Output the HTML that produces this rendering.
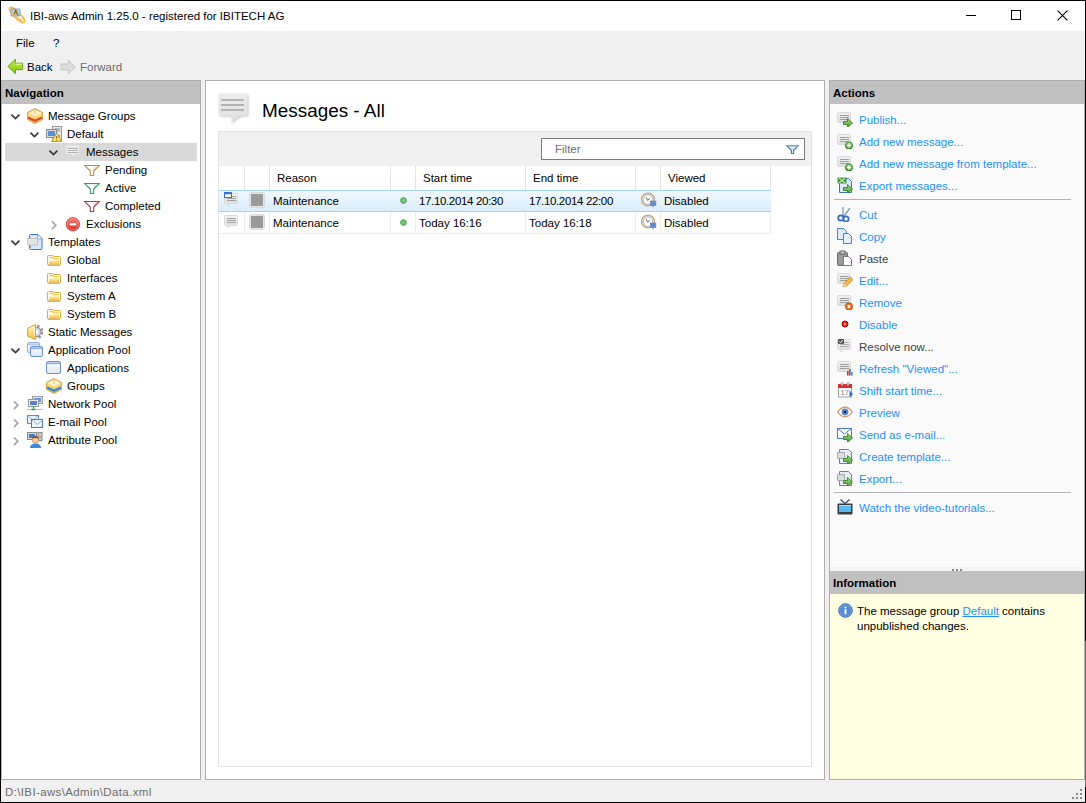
<!DOCTYPE html><html><head><meta charset="utf-8"><style>
html,body{margin:0;padding:0}
body{width:1086px;height:803px;overflow:hidden;position:relative;background:#f0f0f0;font-family:"Liberation Sans",sans-serif;font-size:11.5px;color:#000}
.a{position:absolute;display:block}
.t{position:absolute;white-space:nowrap;line-height:18px;height:18px}
.b{font-weight:bold}
.lnk{color:#1e90ff}
.gry{color:#6d6d6d}
.dk{color:#444}
</style></head><body>

<svg width="0" height="0" style="position:absolute">
<defs>
<linearGradient id="gYel" x1="0" y1="0" x2="0" y2="1"><stop offset="0" stop-color="#fff3c0"/><stop offset="1" stop-color="#f2c23a"/></linearGradient>
<linearGradient id="gFold" x1="0" y1="0" x2="0" y2="1"><stop offset="0" stop-color="#fff0b0"/><stop offset="1" stop-color="#f0c040"/></linearGradient>
<linearGradient id="gBub" x1="0" y1="0" x2="0" y2="1"><stop offset="0" stop-color="#f2f2f2"/><stop offset="1" stop-color="#dcdcdc"/></linearGradient>
<linearGradient id="gRed" x1="0" y1="0" x2="0" y2="1"><stop offset="0" stop-color="#f57a70"/><stop offset="1" stop-color="#d02c2c"/></linearGradient>
<linearGradient id="gGrn" x1="0" y1="0" x2="0" y2="1"><stop offset="0" stop-color="#a8d890"/><stop offset="1" stop-color="#4a9a30"/></linearGradient>
<linearGradient id="gWin" x1="0" y1="0" x2="0" y2="1"><stop offset="0" stop-color="#ffffff"/><stop offset="1" stop-color="#dfe8f5"/></linearGradient>
<linearGradient id="gSel" x1="0" y1="0" x2="0" y2="1"><stop offset="0" stop-color="#f0f8fe"/><stop offset="1" stop-color="#d8ecfb"/></linearGradient>
</defs></svg>
<div class="a" style="left:1px;top:1px;width:1084px;height:30px;background:#fff"></div>
<svg class="a" style="left:6px;top:4px" width="22" height="22" viewBox="0 0 22 22"><ellipse cx="11" cy="11" rx="10.2" ry="3.1" transform="rotate(45 11 11)" fill="#fff6dc" stroke="#f2b84a" stroke-width="1.5"/><rect x="5" y="5" width="9" height="7" fill="#a8c8ea" fill-opacity="0.85" stroke="#7090b8" stroke-width="0.7"/><path d="M7.6 11.5L9.7 6.3L11.8 11.5" stroke="#8a7010" fill="none" stroke-width="1.4"/><path d="M5.2 8.5Q10 14 16 17" stroke="#f2b84a" stroke-width="1.3" fill="none"/></svg>
<div class="t " style="left:30px;top:7px;">IBI-aws Admin 1.25.0 - registered for IBITECH AG</div>
<div class="a" style="left:966px;top:15px;width:10px;height:1px;background:#000"></div>
<div class="a" style="left:1011px;top:10px;width:8px;height:8px;border:1px solid #000"></div>
<svg class="a" style="left:1057px;top:10px" width="11" height="11" viewBox="0 0 11 11"><path d="M0.6 0.6l9.8 9.8M10.4 0.6l-9.8 9.8" stroke="#000" stroke-width="1.1"/></svg>
<div class="t " style="left:16px;top:34px;">File</div>
<div class="t " style="left:53px;top:34px;">?</div>
<svg class="a" style="left:5px;top:56px" width="22" height="22" viewBox="0 0 22 22"><defs><linearGradient id="gBack" x1="0" y1="0" x2="0" y2="1"><stop offset="0" stop-color="#c8f05a"/><stop offset="1" stop-color="#86c400"/></linearGradient></defs><path d="M3 10.4L10.4 3V7.2H17.6V13.6H10.4V17.8Z" fill="url(#gBack)" stroke="#66a810" stroke-width="1"/><path d="M11 8.2H16.6" stroke="#e0ffa0" stroke-width="1"/></svg>
<div class="t " style="left:27px;top:58px;">Back</div>
<svg class="a" style="left:60px;top:59px" width="16" height="16" viewBox="0 0 16 16"><path d="M15.2 8L8.5 1.2V5H1v6h7.5v3.8z" fill="#dcdcdc" stroke="#c4c4c4" stroke-width="1"/></svg>
<div class="t gry" style="left:80px;top:58px;">Forward</div>
<div class="a" style="left:1px;top:80px;width:200px;height:700px;background:#fff;box-sizing:border-box;border:1px solid #afafaf"></div>
<div class="a" style="left:2px;top:81px;width:198px;height:23px;background:#c0c0c0"></div>
<div class="t b" style="left:5px;top:84px;">Navigation</div>
<div class="a" style="left:5px;top:143px;width:192px;height:18px;background:#d9d9d9"></div>
<svg class="a" style="left:11px;top:113px" width="10" height="8" viewBox="0 0 10 8"><path d="M0.5 1.7L4.5 5.6L8.4 1.7" stroke="#3c3c3c" stroke-width="1.7" fill="none"/></svg>
<svg class="a" style="left:27px;top:108px" width="16" height="16" viewBox="0 0 16 16"><path d="M8 0.7L15.3 4.5V11.5L8 15.3L0.7 11.5V4.5Z" fill="url(#gYel)" stroke="#dba34a" stroke-width="1.2"/><path d="M8 1.8L14 5L8 8.2L2 5Z" fill="#fffbe8" opacity="0.7"/><path d="M1.2 9.6L8 12.8L14.8 9.6" stroke="#d94a3a" stroke-width="2.2" fill="none"/><path d="M8 2v4" stroke="#e0a84a" stroke-width="0.8"/></svg>
<div class="t " style="left:48px;top:107px;">Message Groups</div>
<svg class="a" style="left:30px;top:131px" width="10" height="8" viewBox="0 0 10 8"><path d="M0.5 1.7L4.5 5.6L8.4 1.7" stroke="#3c3c3c" stroke-width="1.7" fill="none"/></svg>
<svg class="a" style="left:46px;top:126px" width="16" height="16" viewBox="0 0 16 16"><rect x="6.5" y="0.5" width="9" height="14" fill="#e8e8e8" stroke="#9a9a9a"/><path d="M9 3h5M9 5h5" stroke="#888"/><circle cx="13" cy="10" r="1" fill="#3a3"/><rect x="0.5" y="3.5" width="10" height="8" fill="#d8d8d8" stroke="#8a8a8a"/><rect x="2" y="5" width="7" height="5" fill="#5a8fd8"/><path d="M5.5 15.5L10.7 7l5 8.5z" fill="#fbe36a" stroke="#d4902a"/><path d="M10.7 10v2.5M10.7 13.5v1" stroke="#8a5a10"/></svg>
<div class="t " style="left:67px;top:125px;">Default</div>
<svg class="a" style="left:49px;top:149px" width="10" height="8" viewBox="0 0 10 8"><path d="M0.5 1.7L4.5 5.6L8.4 1.7" stroke="#3c3c3c" stroke-width="1.7" fill="none"/></svg>
<svg class="a" style="left:65px;top:144px" width="16" height="16" viewBox="0 0 16 16"><path d="M1.5 1h12a1 1 0 0 1 1 1v7.5a1 1 0 0 1-1 1h-2.8l-3.7 3.5v-3.5h-5.5a1 1 0 0 1-1-1v-7.5a1 1 0 0 1 1-1z" fill="#eeeeee" stroke="#d6d6d6"/><path d="M2.5 4.4h10.5M2.5 6.5h10.5M2.5 8.5h10.5" stroke="#b2b2b2" stroke-width="1.1"/></svg>
<div class="t " style="left:86px;top:143px;">Messages</div>
<svg class="a" style="left:84px;top:162px" width="16" height="16" viewBox="0 0 16 16"><path d="M0.5 3.5h15l-5.8 5.6v4.4h-3.4v-4.4z" fill="#fff" stroke="#d08a40" stroke-width="1.1"/><path d="M9.5 4.5l4.5 0l-4.5 4.2z" fill="#d08a40" opacity="0.25"/></svg>
<div class="t " style="left:105px;top:161px;">Pending</div>
<svg class="a" style="left:84px;top:180px" width="16" height="16" viewBox="0 0 16 16"><path d="M0.5 3.5h15l-5.8 5.6v4.4h-3.4v-4.4z" fill="#fff" stroke="#30a060" stroke-width="1.1"/><path d="M9.5 4.5l4.5 0l-4.5 4.2z" fill="#30a060" opacity="0.25"/></svg>
<div class="t " style="left:105px;top:179px;">Active</div>
<svg class="a" style="left:84px;top:198px" width="16" height="16" viewBox="0 0 16 16"><path d="M0.5 3.5h15l-5.8 5.6v4.4h-3.4v-4.4z" fill="#fff" stroke="#b83a3a" stroke-width="1.1"/><path d="M9.5 4.5l4.5 0l-4.5 4.2z" fill="#b83a3a" opacity="0.25"/></svg>
<div class="t " style="left:105px;top:197px;">Completed</div>
<svg class="a" style="left:51px;top:219px" width="7" height="12" viewBox="0 0 7 12"><path d="M1 2.3L4.8 6.2L1 10.1" stroke="#a8a8a8" stroke-width="1.7" fill="none"/></svg>
<svg class="a" style="left:65px;top:216px" width="16" height="16" viewBox="0 0 16 16"><circle cx="7.9" cy="8.3" r="6.7" fill="url(#gRed)" stroke="#d04a40" stroke-width="0.9"/><circle cx="7.9" cy="8.3" r="5.5" fill="none" stroke="#fbd0c8" stroke-width="0.6" opacity="0.7"/><rect x="4.6" y="7.2" width="6.6" height="2.2" fill="#fff"/></svg>
<div class="t " style="left:86px;top:215px;">Exclusions</div>
<svg class="a" style="left:11px;top:239px" width="10" height="8" viewBox="0 0 10 8"><path d="M0.5 1.7L4.5 5.6L8.4 1.7" stroke="#3c3c3c" stroke-width="1.7" fill="none"/></svg>
<svg class="a" style="left:27px;top:234px" width="16" height="16" viewBox="0 0 16 16"><path d="M3.5 0.5h7.5l4 4v10a1 1 0 0 1-1 1h-10.5a1 1 0 0 1-1-1v-13a1 1 0 0 1 1-1z" fill="#d8e7fb" stroke="#3c78d0"/><path d="M10.5 1v4h4" fill="#eef5fe" stroke="#7aa6e0" stroke-width="0.8"/><path d="M1.2 4.5h8.3a1 1 0 0 1 1 1v4.5a1 1 0 0 1-1 1h-4.3l-1.7 3v-3h-2.3a1 1 0 0 1-1-1v-4.5a1 1 0 0 1 1-1z" fill="#e4e4e4" stroke="#bdbdbd"/></svg>
<div class="t " style="left:48px;top:233px;">Templates</div>
<svg class="a" style="left:46px;top:252px" width="16" height="16" viewBox="0 0 16 16"><path d="M2.5 3.5h4.5l0.8 1h5.7a1 1 0 0 1 1 1v6.5a1 1 0 0 1-1 1h-11a1 1 0 0 1-1-1v-7.5a1 1 0 0 1 1-1z" fill="#fffcea" stroke="#ddb040" stroke-width="1"/><path d="M3.2 5.5h3.6l0.9 1.2h5.1" stroke="#f0d060" stroke-width="1.3" fill="none"/><path d="M3.2 8.8h3.6l0.8-0.8h5.4v4.2h-9.8z" fill="url(#gFold)"/><path d="M2.2 13.2h11.6" stroke="#e39a3a" stroke-width="1"/></svg>
<div class="t " style="left:67px;top:251px;">Global</div>
<svg class="a" style="left:46px;top:270px" width="16" height="16" viewBox="0 0 16 16"><path d="M2.5 3.5h4.5l0.8 1h5.7a1 1 0 0 1 1 1v6.5a1 1 0 0 1-1 1h-11a1 1 0 0 1-1-1v-7.5a1 1 0 0 1 1-1z" fill="#fffcea" stroke="#ddb040" stroke-width="1"/><path d="M3.2 5.5h3.6l0.9 1.2h5.1" stroke="#f0d060" stroke-width="1.3" fill="none"/><path d="M3.2 8.8h3.6l0.8-0.8h5.4v4.2h-9.8z" fill="url(#gFold)"/><path d="M2.2 13.2h11.6" stroke="#e39a3a" stroke-width="1"/></svg>
<div class="t " style="left:67px;top:269px;">Interfaces</div>
<svg class="a" style="left:46px;top:288px" width="16" height="16" viewBox="0 0 16 16"><path d="M2.5 3.5h4.5l0.8 1h5.7a1 1 0 0 1 1 1v6.5a1 1 0 0 1-1 1h-11a1 1 0 0 1-1-1v-7.5a1 1 0 0 1 1-1z" fill="#fffcea" stroke="#ddb040" stroke-width="1"/><path d="M3.2 5.5h3.6l0.9 1.2h5.1" stroke="#f0d060" stroke-width="1.3" fill="none"/><path d="M3.2 8.8h3.6l0.8-0.8h5.4v4.2h-9.8z" fill="url(#gFold)"/><path d="M2.2 13.2h11.6" stroke="#e39a3a" stroke-width="1"/></svg>
<div class="t " style="left:67px;top:287px;">System A</div>
<svg class="a" style="left:46px;top:306px" width="16" height="16" viewBox="0 0 16 16"><path d="M2.5 3.5h4.5l0.8 1h5.7a1 1 0 0 1 1 1v6.5a1 1 0 0 1-1 1h-11a1 1 0 0 1-1-1v-7.5a1 1 0 0 1 1-1z" fill="#fffcea" stroke="#ddb040" stroke-width="1"/><path d="M3.2 5.5h3.6l0.9 1.2h5.1" stroke="#f0d060" stroke-width="1.3" fill="none"/><path d="M3.2 8.8h3.6l0.8-0.8h5.4v4.2h-9.8z" fill="url(#gFold)"/><path d="M2.2 13.2h11.6" stroke="#e39a3a" stroke-width="1"/></svg>
<div class="t " style="left:67px;top:305px;">System B</div>
<svg class="a" style="left:27px;top:324px" width="16" height="16" viewBox="0 0 16 16"><circle cx="9.5" cy="8" r="5.9" fill="none" stroke="#9a9a9a" stroke-width="2.6" stroke-dasharray="2.3 2.33"/><circle cx="9.5" cy="8" r="4.7" fill="#d4d4d4" stroke="#7c7c7c" stroke-width="0.9"/><circle cx="9.5" cy="8" r="1.9" fill="#fff"/><path d="M0.6 4.2L8.4 0.5V15.5L0.6 12.2z" fill="url(#gYel)" stroke="#dba34a" stroke-width="1"/><path d="M2 5.5L7.5 3v9" stroke="#fff8e0" stroke-width="0.8" fill="none"/></svg>
<div class="t " style="left:48px;top:323px;">Static Messages</div>
<svg class="a" style="left:11px;top:347px" width="10" height="8" viewBox="0 0 10 8"><path d="M0.5 1.7L4.5 5.6L8.4 1.7" stroke="#3c3c3c" stroke-width="1.7" fill="none"/></svg>
<svg class="a" style="left:27px;top:342px" width="16" height="16" viewBox="0 0 16 16"><rect x="0.5" y="0.5" width="12" height="10" rx="1.5" fill="url(#gWin)" stroke="#9ab4e0"/><path d="M1 2.3h11" stroke="#b4c8ea" stroke-width="1.8"/><rect x="3.5" y="4.5" width="12" height="10" rx="1.5" fill="url(#gWin)" stroke="#6a90d0"/><path d="M4 6.3h11" stroke="#94b0e0" stroke-width="1.8"/></svg>
<div class="t " style="left:48px;top:341px;">Application Pool</div>
<svg class="a" style="left:46px;top:360px" width="16" height="16" viewBox="0 0 16 16"><rect x="0.5" y="1.5" width="14" height="12" rx="1.5" fill="url(#gWin)" stroke="#6a90d0"/><path d="M1 3.3h13" stroke="#94b0e0" stroke-width="1.8"/></svg>
<div class="t " style="left:67px;top:359px;">Applications</div>
<svg class="a" style="left:46px;top:378px" width="16" height="16" viewBox="0 0 16 16"><path d="M8 0.7L15.3 4.5V11.5L8 15.3L0.7 11.5V4.5Z" fill="url(#gYel)" stroke="#dba34a" stroke-width="1.2"/><path d="M8 1.8L14 5L8 8.2L2 5Z" fill="#fffbe8" opacity="0.7"/><path d="M1.2 9.6L8 12.8L14.8 9.6" stroke="#2a8ad8" stroke-width="2.2" fill="none"/><path d="M8 2v4" stroke="#e0a84a" stroke-width="0.8"/></svg>
<div class="t " style="left:67px;top:377px;">Groups</div>
<svg class="a" style="left:13px;top:399px" width="7" height="12" viewBox="0 0 7 12"><path d="M1 2.3L4.8 6.2L1 10.1" stroke="#a8a8a8" stroke-width="1.7" fill="none"/></svg>
<svg class="a" style="left:27px;top:396px" width="16" height="16" viewBox="0 0 16 16"><rect x="5.5" y="0.5" width="10" height="7" fill="#e6e6e6" stroke="#a0a0a0"/><rect x="7" y="2" width="7" height="4" fill="#6a94d4"/><rect x="1.5" y="3.5" width="10" height="7" fill="#eeeeee" stroke="#9a9a9a"/><rect x="3" y="5" width="7" height="4" fill="#5a84c8"/><path d="M0 13.5h16" stroke="#c0c0c0" stroke-width="1.2"/><path d="M6.5 10.5v2M4.5 13.5h4" stroke="#40a860" stroke-width="1.6"/></svg>
<div class="t " style="left:48px;top:395px;">Network Pool</div>
<svg class="a" style="left:13px;top:417px" width="7" height="12" viewBox="0 0 7 12"><path d="M1 2.3L4.8 6.2L1 10.1" stroke="#a8a8a8" stroke-width="1.7" fill="none"/></svg>
<svg class="a" style="left:27px;top:414px" width="16" height="16" viewBox="0 0 16 16"><rect x="0.5" y="1.5" width="11" height="8" fill="#eef4fc" stroke="#5a8ad0"/><path d="M1 2l5 4l5-4" stroke="#9ab8e4" fill="none"/><rect x="4.5" y="5.5" width="11" height="8" fill="#f2f7fd" stroke="#4a7ac8"/><path d="M5 6l5.5 4.5l5-4.5" stroke="#8aaee0" fill="none"/></svg>
<div class="t " style="left:48px;top:413px;">E-mail Pool</div>
<svg class="a" style="left:13px;top:435px" width="7" height="12" viewBox="0 0 7 12"><path d="M1 2.3L4.8 6.2L1 10.1" stroke="#a8a8a8" stroke-width="1.7" fill="none"/></svg>
<svg class="a" style="left:27px;top:432px" width="16" height="16" viewBox="0 0 16 16"><rect x="0.5" y="0.5" width="9" height="7" fill="#d8d8d8" stroke="#888"/><rect x="2" y="2" width="6" height="4" fill="#4a7ac0"/><rect x="11" y="0.5" width="4" height="8" fill="#ccc" stroke="#888"/><circle cx="13" cy="5" r="0.8" fill="#3a3"/><path d="M3 16c0-3 2-4.5 5.5-4.5s5.5 1.5 5.5 4.5z" fill="#3a8ae0"/><circle cx="8.5" cy="8" r="3.3" fill="#f5c8a0" stroke="#c08050" stroke-width="0.6"/><path d="M5.2 7.5c0-2.5 1.5-3.6 3.3-3.6s3.3 1.1 3.3 3.6c-1-1.2-2-1.5-3.3-1.5s-2.3 0.3-3.3 1.5z" fill="#8a4a20"/></svg>
<div class="t " style="left:48px;top:431px;">Attribute Pool</div>
<div class="a" style="left:205px;top:80px;width:620px;height:700px;background:#fff;box-sizing:border-box;border:1px solid #afafaf"></div>
<svg class="a" style="left:218px;top:93px" width="32" height="32" viewBox="0 0 32 32"><defs><filter id="sh" x="-20%" y="-20%" width="140%" height="140%"><feGaussianBlur stdDeviation="0.9"/></filter><linearGradient id="gBig" x1="0" y1="0" x2="0" y2="1"><stop offset="0" stop-color="#ececec"/><stop offset="1" stop-color="#e0e0e0"/></linearGradient></defs><path d="M2.5 0.5h25a2 2 0 0 1 2 2v18a2 2 0 0 1-2 2h-5.5l-8.5 7v-7h-11a2 2 0 0 1-2-2v-18a2 2 0 0 1 2-2z" fill="#c8c8c8" filter="url(#sh)" transform="translate(1 1)"/><path d="M2.5 0.5h25a2 2 0 0 1 2 2v18a2 2 0 0 1-2 2h-5.5l-8.5 7v-7h-11a2 2 0 0 1-2-2v-18a2 2 0 0 1 2-2z" fill="url(#gBig)"/><path d="M3 7h23M3 12h23M3 17h23" stroke="#b4b4b4" stroke-width="2"/></svg>
<div class="t" style="left:262px;top:99px;font-size:18.9px;line-height:24px;height:24px">Messages - All</div>
<div class="a" style="left:218px;top:131px;width:594px;height:636px;box-sizing:border-box;border:1px solid #e3e3e3;background:#fff"></div>
<div class="a" style="left:219px;top:132px;width:592px;height:34px;background:#f0f0f0"></div>
<div class="a" style="left:541px;top:138px;width:264px;height:22px;box-sizing:border-box;border:1px solid #7a7a7a;background:#fff"></div>
<div class="t gry" style="left:555px;top:140px;">Filter</div>
<svg class="a" style="left:786px;top:145px" width="13" height="10" viewBox="0 0 13 10"><path d="M0.7 0.7H12.3L7.6 5.3V8.5H5.4V5.3Z" fill="#e4eefb" stroke="#3a72cc" stroke-width="1.1"/><path d="M1.5 1.3H11.5" stroke="#a8c8f0" stroke-width="1.2"/></svg>
<div class="a" style="left:244px;top:166px;width:1px;height:24px;background:#e3e3e3"></div>
<div class="a" style="left:269px;top:166px;width:1px;height:24px;background:#e3e3e3"></div>
<div class="a" style="left:390px;top:166px;width:1px;height:24px;background:#e3e3e3"></div>
<div class="a" style="left:415px;top:166px;width:1px;height:24px;background:#e3e3e3"></div>
<div class="a" style="left:525px;top:166px;width:1px;height:24px;background:#e3e3e3"></div>
<div class="a" style="left:635px;top:166px;width:1px;height:24px;background:#e3e3e3"></div>
<div class="a" style="left:660px;top:166px;width:1px;height:24px;background:#e3e3e3"></div>
<div class="a" style="left:770px;top:166px;width:1px;height:24px;background:#e3e3e3"></div>
<div class="a" style="left:219px;top:166px;width:552px;height:24px;background:#fff"></div>
<div class="a" style="left:244px;top:166px;width:1px;height:24px;background:#e4e4e4"></div>
<div class="a" style="left:269px;top:166px;width:1px;height:24px;background:#e4e4e4"></div>
<div class="a" style="left:390px;top:166px;width:1px;height:24px;background:#e4e4e4"></div>
<div class="a" style="left:415px;top:166px;width:1px;height:24px;background:#e4e4e4"></div>
<div class="a" style="left:525px;top:166px;width:1px;height:24px;background:#e4e4e4"></div>
<div class="a" style="left:635px;top:166px;width:1px;height:24px;background:#e4e4e4"></div>
<div class="a" style="left:660px;top:166px;width:1px;height:24px;background:#e4e4e4"></div>
<div class="a" style="left:770px;top:166px;width:1px;height:24px;background:#e4e4e4"></div>
<div class="t " style="left:277px;top:169px;">Reason</div>
<div class="t " style="left:423px;top:169px;">Start time</div>
<div class="t " style="left:533px;top:169px;">End time</div>
<div class="t " style="left:668px;top:169px;">Viewed</div>
<div class="a" style="left:219px;top:190px;width:552px;height:22px;background:linear-gradient(#f1f8fe,#d9edfc);box-sizing:border-box;border-top:1px solid #9fd4f5;border-bottom:1px solid #9fd4f5"></div>
<div class="a" style="left:219px;top:212px;width:552px;height:22px;background:#fff;box-sizing:border-box;border-bottom:1px solid #ececec"></div>
<div class="a" style="left:244px;top:212px;width:1px;height:22px;background:#ececec"></div>
<div class="a" style="left:269px;top:212px;width:1px;height:22px;background:#ececec"></div>
<div class="a" style="left:390px;top:212px;width:1px;height:22px;background:#ececec"></div>
<div class="a" style="left:415px;top:212px;width:1px;height:22px;background:#ececec"></div>
<div class="a" style="left:525px;top:212px;width:1px;height:22px;background:#ececec"></div>
<div class="a" style="left:635px;top:212px;width:1px;height:22px;background:#ececec"></div>
<div class="a" style="left:660px;top:212px;width:1px;height:22px;background:#ececec"></div>
<div class="a" style="left:770px;top:212px;width:1px;height:22px;background:#ececec"></div>
<svg class="a" style="left:224px;top:192px" width="16" height="16" viewBox="0 0 16 16"><path d="M1.5 1.5h11a1 1 0 0 1 1 1v8a1 1 0 0 1-1 1h-6l-2.5 2.5v-2.5h-2.5a1 1 0 0 1-1-1v-8a1 1 0 0 1 1-1z" fill="url(#gBub)" stroke="#dadada"/><path d="M3 4.5h9M3 6.5h9M3 8.5h9" stroke="#a0a0a0"/><rect x="0.5" y="0.5" width="7" height="5" fill="#fff" stroke="#3a70d0"/><path d="M1 1.5h6" stroke="#3a70d0" stroke-width="1.5"/></svg>
<svg class="a" style="left:249px;top:192px" width="16" height="16" viewBox="0 0 16 16"><rect x="0.5" y="0.5" width="15" height="15" rx="2" fill="#e6e6e6" stroke="#d8d8d8"/><rect x="2" y="2" width="12" height="12" fill="#9a9a9a"/></svg>
<div class="t " style="left:273px;top:192px;">Maintenance</div>
<svg class="a" style="left:400px;top:197px" width="7" height="7" viewBox="0 0 7 7"><circle cx="3.5" cy="3.5" r="2.8" fill="#7acb7a" stroke="#3a9a3a"/></svg>
<div class="t " style="left:419px;top:192px;letter-spacing:-0.35px">17.10.2014 20:30</div>
<div class="t " style="left:529px;top:192px;letter-spacing:-0.35px">17.10.2014 22:00</div>
<svg class="a" style="left:641px;top:192px" width="16" height="16" viewBox="0 0 16 16"><circle cx="7" cy="7.5" r="6.4" fill="#f6f6f6" stroke="#c9a263" stroke-width="1.3"/><circle cx="7" cy="7.5" r="4.8" fill="#fff" stroke="#86a8e4" stroke-width="0.8"/><path d="M5.2 5.2L6.6 8.3L8.8 6.4" stroke="#555" stroke-width="0.9" fill="none"/><rect x="9.3" y="9" width="5.6" height="4.6" fill="#5a8ad4" stroke="#8a8a8a" stroke-width="0.7"/><rect x="11.3" y="13.6" width="1.6" height="1.6" fill="#999"/></svg>
<div class="t " style="left:664px;top:192px;">Disabled</div>
<svg class="a" style="left:224px;top:214px" width="16" height="16" viewBox="0 0 16 16"><path d="M1.5 1.5h11a1 1 0 0 1 1 1v8a1 1 0 0 1-1 1h-6l-2.5 2.5v-2.5h-2.5a1 1 0 0 1-1-1v-8a1 1 0 0 1 1-1z" fill="url(#gBub)" stroke="#dadada"/><path d="M3 4.5h9M3 6.5h9M3 8.5h9" stroke="#a0a0a0"/></svg>
<svg class="a" style="left:249px;top:214px" width="16" height="16" viewBox="0 0 16 16"><rect x="0.5" y="0.5" width="15" height="15" rx="2" fill="#e6e6e6" stroke="#d8d8d8"/><rect x="2" y="2" width="12" height="12" fill="#9a9a9a"/></svg>
<div class="t " style="left:273px;top:214px;">Maintenance</div>
<svg class="a" style="left:400px;top:219px" width="7" height="7" viewBox="0 0 7 7"><circle cx="3.5" cy="3.5" r="2.8" fill="#7acb7a" stroke="#3a9a3a"/></svg>
<div class="t " style="left:419px;top:214px;">Today 16:16</div>
<div class="t " style="left:529px;top:214px;">Today 16:18</div>
<svg class="a" style="left:641px;top:214px" width="16" height="16" viewBox="0 0 16 16"><circle cx="7" cy="7.5" r="6.4" fill="#f6f6f6" stroke="#c9a263" stroke-width="1.3"/><circle cx="7" cy="7.5" r="4.8" fill="#fff" stroke="#86a8e4" stroke-width="0.8"/><path d="M5.2 5.2L6.6 8.3L8.8 6.4" stroke="#555" stroke-width="0.9" fill="none"/><rect x="9.3" y="9" width="5.6" height="4.6" fill="#5a8ad4" stroke="#8a8a8a" stroke-width="0.7"/><rect x="11.3" y="13.6" width="1.6" height="1.6" fill="#999"/></svg>
<div class="t " style="left:664px;top:214px;">Disabled</div>
<div class="a" style="left:829px;top:80px;width:256px;height:700px;background:#fafafa;box-sizing:border-box;border:1px solid #afafaf"></div>
<div class="a" style="left:830px;top:81px;width:254px;height:23px;background:#c0c0c0"></div>
<div class="t b" style="left:833px;top:84px;">Actions</div>
<svg class="a" style="left:837px;top:111px" width="16" height="16" viewBox="0 0 16 16"><path d="M1.5 1.5h11a1 1 0 0 1 1 1v8a1 1 0 0 1-1 1h-11a1 1 0 0 1-1-1v-8a1 1 0 0 1 1-1z" fill="url(#gBub)" stroke="#dadada"/><path d="M3 4.5h9M3 6.5h9M3 8.5h9" stroke="#a0a0a0"/><path d="M6.5 10.5h4v-3l5 4.5l-5 4.5v-3h-4z" fill="url(#gGrn)" stroke="#2f8a20" stroke-width="0.9"/></svg>
<div class="t lnk" style="left:859px;top:111px;">Publish...</div>
<svg class="a" style="left:837px;top:133px" width="16" height="16" viewBox="0 0 16 16"><path d="M1.5 1.5h11a1 1 0 0 1 1 1v8a1 1 0 0 1-1 1h-11a1 1 0 0 1-1-1v-8a1 1 0 0 1 1-1z" fill="url(#gBub)" stroke="#dadada"/><path d="M3 4.5h9M3 6.5h9M3 8.5h9" stroke="#a0a0a0"/><circle cx="12" cy="12.5" r="3.6" fill="url(#gGrn)" stroke="#2f8a20"/><path d="M12 10.5v4M10 12.5h4" stroke="#fff" stroke-width="1.4"/></svg>
<div class="t lnk" style="left:859px;top:133px;">Add new message...</div>
<svg class="a" style="left:837px;top:155px" width="16" height="16" viewBox="0 0 16 16"><path d="M1.5 1.5h11a1 1 0 0 1 1 1v8a1 1 0 0 1-1 1h-11a1 1 0 0 1-1-1v-8a1 1 0 0 1 1-1z" fill="url(#gBub)" stroke="#dadada"/><path d="M3 4.5h9M3 6.5h9M3 8.5h9" stroke="#a0a0a0"/><circle cx="12" cy="12.5" r="3.6" fill="url(#gGrn)" stroke="#2f8a20"/><path d="M12 10.5v4M10 12.5h4" stroke="#fff" stroke-width="1.4"/></svg>
<div class="t lnk" style="left:859px;top:155px;">Add new message from template...</div>
<svg class="a" style="left:837px;top:177px" width="16" height="16" viewBox="0 0 16 16"><path d="M2.5 1.5h9l3 3v11h-12z" fill="#dce9fa" stroke="#3a72c8"/><path d="M0.5 0.5h9v6h-9z" fill="#3a8a30" opacity="0.9"/><path d="M2 1l6 5M8 1l-6 5" stroke="#bfe6a8" stroke-width="1.2"/><path d="M6.5 10.5h4v-3l5 4.5l-5 4.5v-3h-4z" fill="url(#gGrn)" stroke="#2f8a20" stroke-width="0.9"/></svg>
<div class="t lnk" style="left:859px;top:177px;">Export messages...</div>
<div class="a" style="left:834px;top:199px;width:237px;height:1px;background:#b4b4b4"></div>
<svg class="a" style="left:837px;top:206px" width="16" height="16" viewBox="0 0 16 16"><path d="M6 1v9M13 2l-6 8" stroke="#7a9ac8" stroke-width="1.3"/><circle cx="3.8" cy="12" r="2.6" fill="none" stroke="#3a70c0" stroke-width="1.8"/><circle cx="9" cy="13" r="2.6" fill="none" stroke="#3a70c0" stroke-width="1.8"/></svg>
<div class="t lnk" style="left:859px;top:206px;">Cut</div>
<svg class="a" style="left:837px;top:228px" width="16" height="16" viewBox="0 0 16 16"><path d="M0.5 0.5h6l3 3v8h-9z" fill="#e0ecfb" stroke="#4a80d0"/><path d="M6.5 5.5h5l3 3v7h-8z" fill="#e6f0fc" stroke="#4a80d0"/></svg>
<div class="t lnk" style="left:859px;top:228px;">Copy</div>
<svg class="a" style="left:837px;top:250px" width="16" height="16" viewBox="0 0 16 16"><rect x="0.5" y="2.5" width="10" height="13" rx="1" fill="#9a9a9a" stroke="#6a6a6a"/><rect x="3" y="1" width="5" height="3" fill="#ccc" stroke="#666"/><path d="M6.5 6.5h5l3 3v6h-8z" fill="#fff" stroke="#7a7a7a"/></svg>
<div class="t dk" style="left:859px;top:250px;">Paste</div>
<svg class="a" style="left:837px;top:272px" width="16" height="16" viewBox="0 0 16 16"><path d="M1.5 1.5h11a1 1 0 0 1 1 1v8a1 1 0 0 1-1 1h-11a1 1 0 0 1-1-1v-8a1 1 0 0 1 1-1z" fill="url(#gBub)" stroke="#dadada"/><path d="M3 4.5h9M3 6.5h9M3 8.5h9" stroke="#a0a0a0"/><path d="M6 15l1-3.5l6.5-6.5l2.5 2.5l-6.5 6.5z" fill="#f8c040" stroke="#c07a20" stroke-width="0.8"/><path d="M6 15l1-3.5l2.5 2.5z" fill="#f5d8b0"/></svg>
<div class="t lnk" style="left:859px;top:272px;">Edit...</div>
<svg class="a" style="left:837px;top:294px" width="16" height="16" viewBox="0 0 16 16"><path d="M1.5 1.5h11a1 1 0 0 1 1 1v8a1 1 0 0 1-1 1h-11a1 1 0 0 1-1-1v-8a1 1 0 0 1 1-1z" fill="url(#gBub)" stroke="#dadada"/><path d="M3 4.5h9M3 6.5h9M3 8.5h9" stroke="#a0a0a0"/><circle cx="12" cy="12.5" r="3.6" fill="#e8702a" stroke="#c05010"/><path d="M10.7 11.2l2.6 2.6M13.3 11.2l-2.6 2.6" stroke="#fff" stroke-width="1.2"/></svg>
<div class="t lnk" style="left:859px;top:294px;">Remove</div>
<svg class="a" style="left:837px;top:316px" width="16" height="16" viewBox="0 0 16 16"><circle cx="8" cy="8" r="3" fill="#e02020" stroke="#b00000"/><circle cx="8" cy="8" r="1.2" fill="#ff9090"/></svg>
<div class="t lnk" style="left:859px;top:316px;">Disable</div>
<svg class="a" style="left:837px;top:338px" width="16" height="16" viewBox="0 0 16 16"><path d="M1.5 1.5h11a1 1 0 0 1 1 1v8a1 1 0 0 1-1 1h-6l-2.5 2.5v-2.5h-2.5a1 1 0 0 1-1-1v-8a1 1 0 0 1 1-1z" fill="url(#gBub)" stroke="#dadada"/><path d="M3 4.5h9M3 6.5h9M3 8.5h9" stroke="#b0b0b0"/><rect x="1" y="1" width="6" height="5" rx="1" fill="#555"/><path d="M2.5 3.5l1.2 1.2l2-2.4" stroke="#fff" fill="none"/></svg>
<div class="t dk" style="left:859px;top:338px;">Resolve now...</div>
<svg class="a" style="left:837px;top:360px" width="16" height="16" viewBox="0 0 16 16"><path d="M1.5 1.5h11a1 1 0 0 1 1 1v8a1 1 0 0 1-1 1h-11a1 1 0 0 1-1-1v-8a1 1 0 0 1 1-1z" fill="url(#gBub)" stroke="#dadada"/><path d="M3 4.5h9M3 6.5h9M3 8.5h9" stroke="#a0a0a0"/><rect x="10" y="11" width="1.6" height="4.5" fill="#d03030"/><rect x="12" y="9" width="1.6" height="6.5" fill="#3a6ad0"/><rect x="14" y="12" width="1.6" height="3.5" fill="#3aa040"/></svg>
<div class="t lnk" style="left:859px;top:360px;">Refresh "Viewed"...</div>
<svg class="a" style="left:837px;top:382px" width="16" height="16" viewBox="0 0 16 16"><rect x="1.5" y="2.5" width="13" height="12.5" fill="#fff" stroke="#a0a0a0"/><rect x="1" y="2" width="14" height="4" fill="#e22a2a"/><rect x="4" y="0.5" width="2" height="3" rx="1" fill="#ddd" stroke="#888" stroke-width="0.6"/><rect x="10" y="0.5" width="2" height="3" rx="1" fill="#ddd" stroke="#888" stroke-width="0.6"/><text x="3.6" y="13.2" font-size="7.5" font-family="Liberation Sans" fill="#808080">17</text><path d="M12.5 8.5l3.5 3.5l-3.5 3.5z" fill="#3a6ed0"/></svg>
<div class="t lnk" style="left:859px;top:382px;">Shift start time...</div>
<svg class="a" style="left:837px;top:404px" width="16" height="16" viewBox="0 0 16 16"><path d="M0.8 8c2-3.3 4.4-4.8 7.2-4.8s5.2 1.5 7.2 4.8c-2 3.3-4.4 4.8-7.2 4.8s-5.2-1.5-7.2-4.8z" fill="#fff" stroke="#d49a6a" stroke-width="1.4"/><circle cx="8" cy="8" r="3.4" fill="#5a86dc"/><circle cx="8" cy="8" r="1.3" fill="#10204a"/></svg>
<div class="t lnk" style="left:859px;top:404px;">Preview</div>
<svg class="a" style="left:837px;top:426px" width="16" height="16" viewBox="0 0 16 16"><rect x="0.5" y="2.5" width="14" height="10" fill="#fff" stroke="#4a7ac8"/><path d="M0.5 2.5l7 5.5l7-5.5" stroke="#4a7ac8" fill="none"/><path d="M6.5 10.5h4v-3l5 4.5l-5 4.5v-3h-4z" fill="url(#gGrn)" stroke="#2f8a20" stroke-width="0.9"/></svg>
<div class="t lnk" style="left:859px;top:426px;">Send as e-mail...</div>
<svg class="a" style="left:837px;top:448px" width="16" height="16" viewBox="0 0 16 16"><path d="M2.5 1.5h9l3 3v11h-12z" fill="#e8eef8" stroke="#5a82c8"/><path d="M0.5 4.5h7v6h-7z" fill="#ddd" stroke="#aaa"/><path d="M6.5 10.5h4v-3l5 4.5l-5 4.5v-3h-4z" fill="url(#gGrn)" stroke="#2f8a20" stroke-width="0.9"/></svg>
<div class="t lnk" style="left:859px;top:448px;">Create template...</div>
<svg class="a" style="left:837px;top:470px" width="16" height="16" viewBox="0 0 16 16"><path d="M2.5 1.5h9l3 3v11h-12z" fill="#e8eef8" stroke="#5a82c8"/><path d="M0.5 4.5h7v6h-7z" fill="#ddd" stroke="#aaa"/><path d="M6.5 10.5h4v-3l5 4.5l-5 4.5v-3h-4z" fill="url(#gGrn)" stroke="#2f8a20" stroke-width="0.9"/></svg>
<div class="t lnk" style="left:859px;top:470px;">Export...</div>
<div class="a" style="left:834px;top:492px;width:237px;height:1px;background:#b4b4b4"></div>
<svg class="a" style="left:837px;top:499px" width="16" height="16" viewBox="0 0 16 16"><path d="M3.5 0.5l4.5 4l4.5-4" stroke="#3a4a6a" stroke-width="1.2" fill="none"/><rect x="0.5" y="4.5" width="15" height="11" rx="1" fill="#3a3a3a"/><rect x="2" y="6" width="12" height="7" fill="#5ab8f0"/><path d="M2 6.5h12" stroke="#a8dcfa"/><rect x="2" y="13.8" width="1.5" height="1" fill="#e03030"/></svg>
<div class="t lnk" style="left:859px;top:499px;">Watch the video-tutorials...</div>
<div class="a" style="left:830px;top:567px;width:254px;height:4px;background:#f4f4f4"></div>
<div class="a" style="left:952px;top:569px;width:2px;height:2px;background:#8a8a8a"></div>
<div class="a" style="left:956px;top:569px;width:2px;height:2px;background:#8a8a8a"></div>
<div class="a" style="left:960px;top:569px;width:2px;height:2px;background:#8a8a8a"></div>
<div class="a" style="left:830px;top:571px;width:254px;height:23px;background:#c0c0c0"></div>
<div class="t b" style="left:833px;top:574px;">Information</div>
<div class="a" style="left:830px;top:594px;width:254px;height:185px;background:#ffffe1"></div>
<svg class="a" style="left:838px;top:603px" width="15" height="15" viewBox="0 0 15 15"><circle cx="7.5" cy="7.5" r="6.8" fill="#7aa8e0" stroke="#3a6ab0"/><circle cx="7.5" cy="7.5" r="5.5" fill="#5a8ad0"/><rect x="6.6" y="6.2" width="1.8" height="5" fill="#fff"/><circle cx="7.5" cy="4.4" r="1" fill="#fff"/></svg>
<div class="t" style="left:857px;top:604px;line-height:15px;height:auto">The message group <span class="lnk" style="text-decoration:underline">Default</span> contains<br>unpublished changes.</div>
<div class="t gry" style="left:5px;top:783px;letter-spacing:0.37px">D:\IBI-aws\Admin\Data.xml</div>
<div class="a" style="left:1080px;top:789px;width:2px;height:2px;background:#8a8a8a"></div>
<div class="a" style="left:1076px;top:793px;width:2px;height:2px;background:#8a8a8a"></div>
<div class="a" style="left:1080px;top:793px;width:2px;height:2px;background:#8a8a8a"></div>
<div class="a" style="left:1072px;top:797px;width:2px;height:2px;background:#8a8a8a"></div>
<div class="a" style="left:1076px;top:797px;width:2px;height:2px;background:#8a8a8a"></div>
<div class="a" style="left:1080px;top:797px;width:2px;height:2px;background:#8a8a8a"></div>
<div class="a" style="left:0;top:0;width:1086px;height:803px;box-sizing:border-box;border:1px solid #000;pointer-events:none"></div>
<div class="a" style="left:1085px;top:641px;width:1px;height:146px;background:#6e6e6e"></div>
</body></html>
